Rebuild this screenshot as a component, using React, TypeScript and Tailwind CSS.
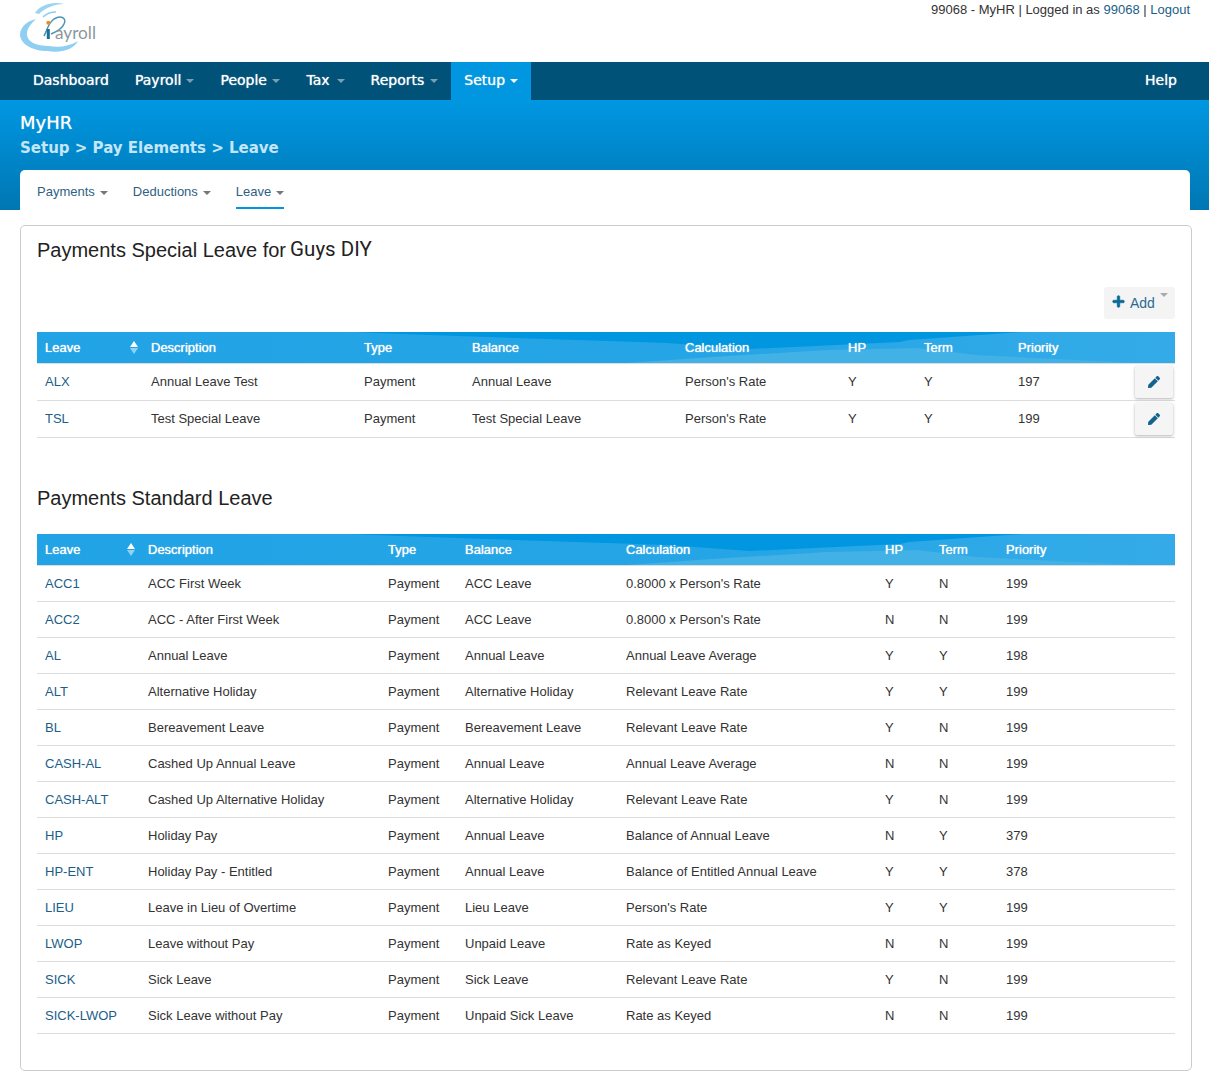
import React from "react";
import { FaPen, FaPlus } from "react-icons/fa";

const navItems = [
  { label: "Dashboard", gap: "gap-[5px]" },
  { label: "Payroll", caret: true, gap: "gap-[5px]" },
  { label: "People", caret: true, gap: "gap-[5.5px]" },
  { label: "Tax", caret: true, gap: "gap-[7px]" },
  { label: "Reports", caret: true, gap: "gap-[6px]" },
  { label: "Setup", caret: true, active: true, gap: "gap-[5px]" },
];

const specialCols = ["w-[106px]", "w-[213px]", "w-[108px]", "w-[213px]", "w-[163px]", "w-[76px]", "w-[94px]", "w-[120px]", "w-[45px]"];
const standardCols = ["w-[103px]", "w-[240px]", "w-[77px]", "w-[161px]", "w-[259px]", "w-[54px]", "w-[67px]", "w-[177px]"];

const specialRows = [
  ["ALX", "Annual Leave Test", "Payment", "Annual Leave", "Person's Rate", "Y", "Y", "197"],
  ["TSL", "Test Special Leave", "Payment", "Test Special Leave", "Person's Rate", "Y", "Y", "199"],
];

const standardRows = [
  ["ACC1", "ACC First Week", "Payment", "ACC Leave", "0.8000 x Person's Rate", "Y", "N", "199"],
  ["ACC2", "ACC - After First Week", "Payment", "ACC Leave", "0.8000 x Person's Rate", "N", "N", "199"],
  ["AL", "Annual Leave", "Payment", "Annual Leave", "Annual Leave Average", "Y", "Y", "198"],
  ["ALT", "Alternative Holiday", "Payment", "Alternative Holiday", "Relevant Leave Rate", "Y", "Y", "199"],
  ["BL", "Bereavement Leave", "Payment", "Bereavement Leave", "Relevant Leave Rate", "Y", "N", "199"],
  ["CASH-AL", "Cashed Up Annual Leave", "Payment", "Annual Leave", "Annual Leave Average", "N", "N", "199"],
  ["CASH-ALT", "Cashed Up Alternative Holiday", "Payment", "Alternative Holiday", "Relevant Leave Rate", "Y", "N", "199"],
  ["HP", "Holiday Pay", "Payment", "Annual Leave", "Balance of Annual Leave", "N", "Y", "379"],
  ["HP-ENT", "Holiday Pay - Entitled", "Payment", "Annual Leave", "Balance of Entitled Annual Leave", "Y", "Y", "378"],
  ["LIEU", "Leave in Lieu of Overtime", "Payment", "Lieu Leave", "Person's Rate", "Y", "Y", "199"],
  ["LWOP", "Leave without Pay", "Payment", "Unpaid Leave", "Rate as Keyed", "N", "N", "199"],
  ["SICK", "Sick Leave", "Payment", "Sick Leave", "Relevant Leave Rate", "Y", "N", "199"],
  ["SICK-LWOP", "Sick Leave without Pay", "Payment", "Unpaid Sick Leave", "Rate as Keyed", "N", "N", "199"],
];

const headers = ["Description", "Type", "Balance", "Calculation", "HP", "Term", "Priority"];

const Logo = () => (
  <svg width="80" height="54" viewBox="0 0 80 54" className="mt-[1px]">
    <path d="M16 18 C7 20 0 26 0 34 C1 44 14 50 27 50 C40 52 52 50 58 40 C50 45 38 47 29 45 C16 45 7 41 7 33 C7 27 11 23 16 18 Z" fill="#8fcff1" />
    <path d="M15 12 C20 4 33 0 44 3 C36 3 26 6 19 13 Z" fill="#9ad4f3" />
    <path d="M23 16 C27 12 31 11 36 11" fill="none" stroke="#8fcff1" strokeWidth="1.6" />
    <path d="M24 35 C27 30 28 22 34 18 C41 14 47 17 44 23 C42 28 36 31 31 33" fill="none" stroke="#4d93b5" strokeWidth="1.5" />
    <circle cx="28.3" cy="21.7" r="2" fill="#f08a24" />
    <rect x="26.8" y="28" width="3" height="10" fill="#1b6f9c" />
    <text x="35" y="38" fontFamily="Lato" fontWeight="400" fontSize="18" fill="#8b979d" textLength="41" lengthAdjust="spacingAndGlyphs">
      ayroll
    </text>
  </svg>
);

const Caret = ({ className }: { className: string }) => (
  <span className={`inline-block w-0 h-0 border-x-4 border-t-4 border-x-transparent ${className}`} />
);

const HeaderWave = () => (
  <svg className="absolute left-0 top-0 w-full h-[31px]" viewBox="0 0 1138 31" preserveAspectRatio="none">
    <defs>
      <linearGradient id="headBase" x1="0" x2="1" y1="0" y2="0">
        <stop offset="0" stopColor="#21a3e5" />
        <stop offset="0.6" stopColor="#25a5e6" />
        <stop offset="1" stopColor="#34abe8" />
      </linearGradient>
    </defs>
    <rect width="1138" height="31" fill="url(#headBase)" />
    <polygon points="316,0 363,2 630,11 713,17 863,10 872,8 985,0" fill="#0096e0" />
    <polygon points="590,31 690,24 790,18 880,16 940,23 1000,26 1100,31" fill="#41b1e6" />
  </svg>
);

const SortIcon = () => (
  <span className="flex flex-col gap-[1px]">
    <span className="w-0 h-0 border-x-[4.5px] border-b-[6px] border-x-transparent border-b-white" />
    <span className="w-0 h-0 border-x-[4.5px] border-t-[6px] border-x-transparent border-t-white/50" />
  </span>
);

const LeaveTable = ({
  cols,
  rows,
  rowHeight,
  editable,
}: {
  cols: string[];
  rows: string[][];
  rowHeight: string;
  editable?: boolean;
}) => (
  <div className="relative">
    <HeaderWave />
    <table className="relative w-full table-fixed border-separate border-spacing-0 text-[13px] text-[#333]">
      <colgroup>
        {cols.map((c, i) => (
          <col key={i} className={c} />
        ))}
      </colgroup>
      <thead>
        <tr>
          <th className="h-[32px] border-b border-[#ddd] pl-2 pr-[5px] text-left font-normal text-white [text-shadow:0_0_1px_#fff]">
            <span className="flex items-center justify-between">
              Leave
              <SortIcon />
            </span>
          </th>
          {headers.map((h) => (
            <th key={h} className="h-[32px] border-b border-[#ddd] px-2 text-left font-normal text-white [text-shadow:0_0_1px_#fff]">
              {h}
            </th>
          ))}
          {editable && <th className="border-b border-[#ddd]" />}
        </tr>
      </thead>
      <tbody>
        {rows.map((row) => (
          <tr key={row[0]}>
            {row.map((cell, i) => (
              <td key={i} className={`${rowHeight} border-b border-[#ddd] px-2 whitespace-nowrap`}>
                {i === 0 ? <a className="text-[#1b5e88]">{cell}</a> : cell}
              </td>
            ))}
            {editable && (
              <td className={`${rowHeight} border-b border-[#ddd]`}>
                <button className="ml-[5px] flex h-[32px] w-[38px] items-center justify-center rounded-[2px] bg-[#f5f5f5] text-[#12638f] shadow-[0_1px_3px_rgba(0,0,0,0.3)]">
                  <FaPen className="h-[12px] w-[12px]" />
                </button>
              </td>
            )}
          </tr>
        ))}
      </tbody>
    </table>
  </div>
);

export default function App() {
  return (
    <div className="bg-white pb-[16px] font-['Liberation_Sans',sans-serif] text-[13px] text-[#333]">
      <header className="flex h-[62px] justify-between pl-[20px] pr-[19px]">
        <Logo />
        <p className="leading-[20px]">
          99068 - MyHR | Logged in as <a className="text-[#1b5e88]">99068</a> | <a className="text-[#1b5e88]">Logout</a>
        </p>
      </header>

      <nav className="flex h-[38px] justify-between bg-[#005279] pl-[20px] pr-[19px] font-['DejaVu_Sans',sans-serif] text-[14px] text-white [text-shadow:0_0_1px_rgba(255,255,255,0.9)]">
        <ul className="flex">
          {navItems.map((item) => (
            <li key={item.label} className={`flex items-center px-[13px] pb-[1px] ${item.gap} ${item.active ? "bg-[#0096e0]" : ""}`}>
              {item.label}
              {item.caret && <Caret className={item.active ? "border-t-white" : "border-t-[#7f9fb1]"} />}
            </li>
          ))}
        </ul>
        <a className="flex items-center px-[13px] pb-[1px]">Help</a>
      </nav>

      <div className="bg-gradient-to-b from-[#0097e2] to-[#0077b3] px-[19px] pt-[12px] font-['DejaVu_Sans',sans-serif]">
        <div className="pl-[1px] text-[18px] leading-[22px] text-white [text-shadow:0_0_1px_rgba(255,255,255,0.7)]">MyHR</div>
        <div className="pl-[1px] pt-[4px] text-[15px] font-bold leading-[20px] text-[#c5e6f7]">Setup &gt; Pay Elements &gt; Leave</div>
        <div className="ml-[1px] mt-[12px] flex h-[40px] gap-[25px] rounded-t-[5px] bg-white px-[17px] font-['Liberation_Sans',sans-serif] text-[13px] text-[#2f5f85]">
          <a className="flex h-[39px] items-center gap-[5px] pt-[5px]">
            Payments <Caret className="mt-[2px] border-t-[#777]" />
          </a>
          <a className="flex h-[39px] items-center gap-[5px] pt-[5px]">
            Deductions <Caret className="mt-[2px] border-t-[#777]" />
          </a>
          <a className="flex h-[39px] items-center gap-[5px] border-b-2 border-[#0096e0] pt-[7px]">
            Leave <Caret className="mt-[2px] border-t-[#777]" />
          </a>
        </div>
      </div>

      <main className="ml-[20px] mr-[17px] mt-[15px] rounded-[5px] border border-[#ccc] px-[16px] pb-[36px] pt-[11px]">
        <h2 className="text-[20px] font-normal leading-[24px] text-[#222]">
          Payments Special Leave for
          <span className="ml-[-1px] align-[1px] font-['Roboto',sans-serif] text-[20.5px]"> Guys DIY</span>
        </h2>
        <div className="mt-[25px] flex justify-end">
          <button className="flex h-[32px] w-[71px] items-start gap-[5px] rounded-[3px] bg-[#f4f4f4] pl-[8px] text-[14px] text-[#2b6b93]">
            <FaPlus className="mt-[8px] h-[13px] w-[13px] text-[#0d6a96] [stroke-width:30]" />
            <span className="mt-[6px]">Add</span>
            <Caret className="mt-[6px] border-t-[#aaa]" />
          </button>
        </div>
        <div className="mt-[13px]">
          <LeaveTable cols={specialCols} rows={specialRows} rowHeight="h-[37px]" editable />
        </div>

        <h2 className="mt-[48px] text-[20px] font-normal leading-[24px] text-[#222]">Payments Standard Leave</h2>
        <div className="mt-[24px]">
          <LeaveTable cols={standardCols} rows={standardRows} rowHeight="h-[36px]" />
        </div>
      </main>
    </div>
  );
}
